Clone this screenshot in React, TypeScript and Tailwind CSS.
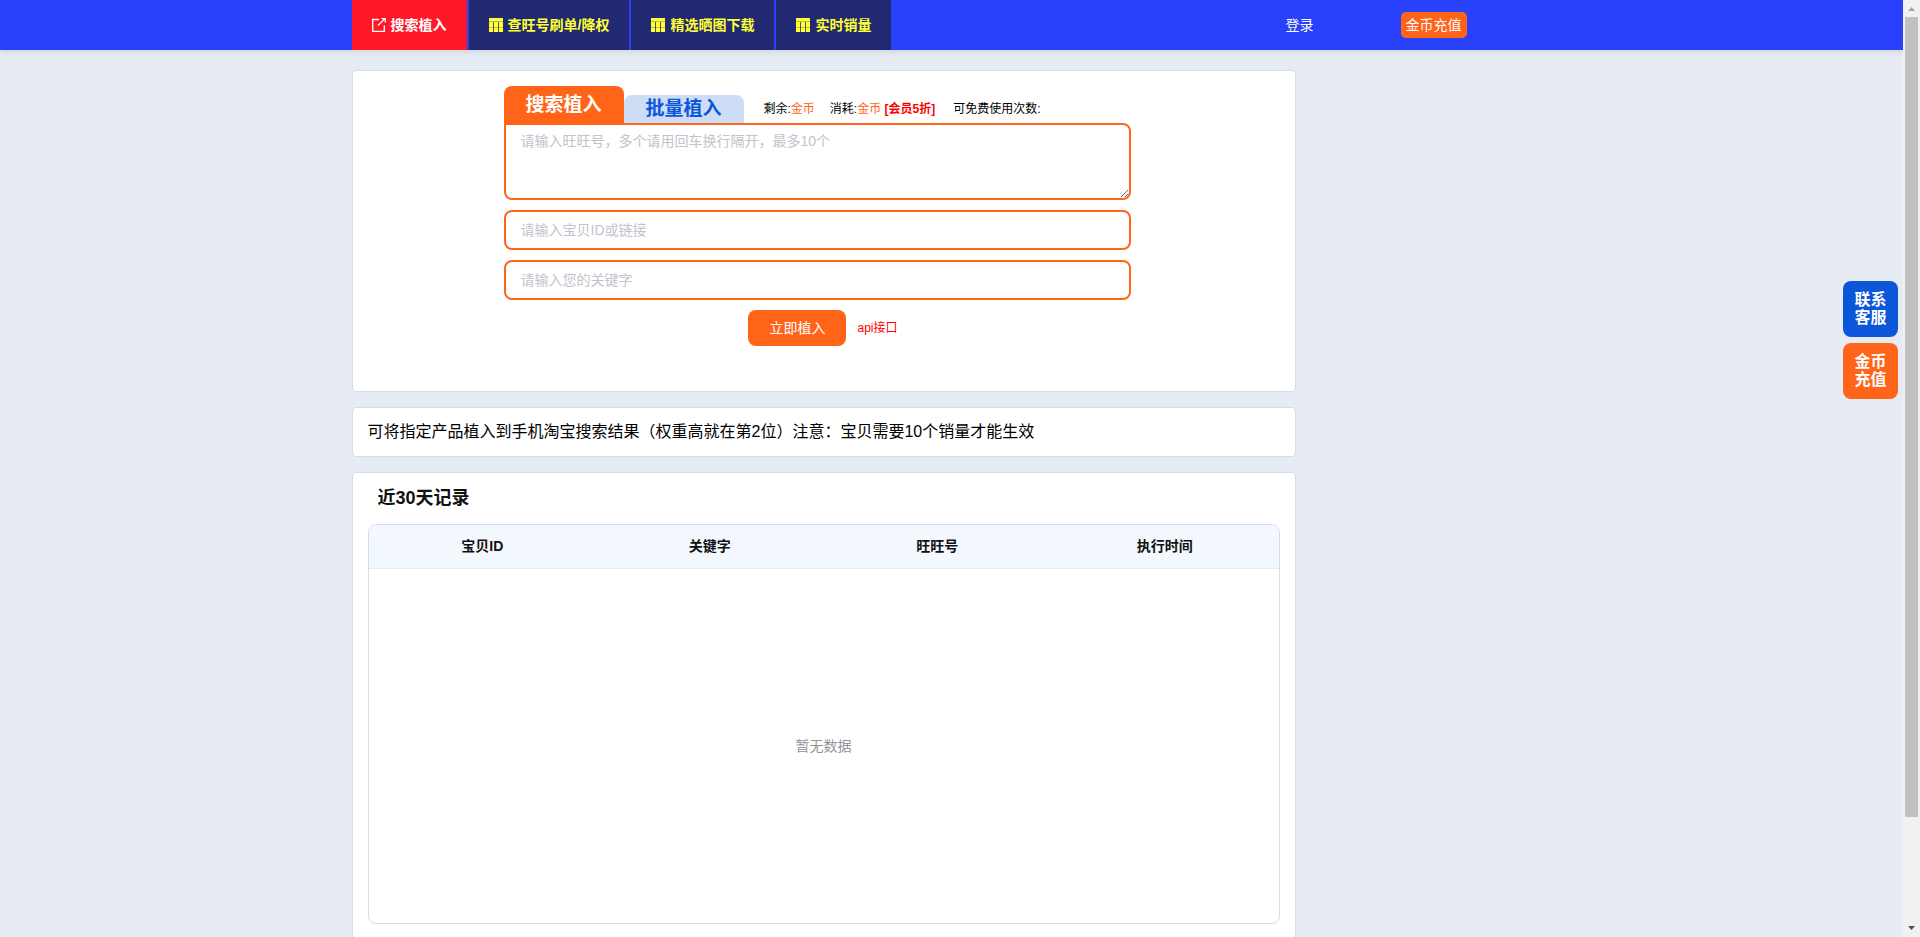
import React from "react";

const tools = ["查旺号刷单/降权", "精选晒图下载", "实时销量"];
const columns = ["宝贝ID", "关键字", "旺旺号", "执行时间"];

function ShareIcon() {
  return (
    <svg width="14" height="14" viewBox="0 0 14 14" fill="none" stroke="currentColor" strokeWidth="1.3" aria-hidden="true">
      <path d="M7 1.500H.7v11.8h11.6V7.500" />
      <path d="M6 7.500 12.800.9M9.500.7h3.800v3.800" />
    </svg>
  );
}

function GridIcon() {
  return (
    <svg width="14" height="14" viewBox="0 0 14 14" aria-hidden="true">
      <path d="M0 0h14v14H0z" fill="currentColor" />
      <path d="M4 4h1v10H4zM9 4h1v10H9z" fill="#202971" fillOpacity="0.8" />
      <path d="M0 3h14v1H0zM0 9h14v1H0z" fill="#202971" fillOpacity="0.3" />
    </svg>
  );
}

function Header() {
  return (
    <header className="shrink-0 bg-[#2941fb] shadow-[0_2px_6px_rgba(0,0,0,0.1)]">
      <div className="mx-auto flex h-[50px] max-w-[1200px] items-center">
        <nav className="flex h-full gap-[2px] text-sm font-bold">
          <a href="#search" className="flex items-center gap-[5px] bg-[#ff1827] px-5 text-white">
            <ShareIcon />
            搜索植入
          </a>
          {tools.map((tool) => (
            <a key={tool} href="#tool" className="flex items-center gap-[5px] bg-[#202971] px-5 text-[#ffff33]">
              <GridIcon />
              {tool}
            </a>
          ))}
        </nav>
        <div className="mr-[85px] ml-auto flex items-center gap-[87px] text-sm text-white">
          <a href="#login">登录</a>
          <a href="#recharge" className="rounded-[5px] bg-[#ff6419] px-[5px] py-[3px]">
            金币充值
          </a>
        </div>
      </div>
    </header>
  );
}

const fieldClass =
  "block w-full border-2 border-[#ff6419] bg-white px-[15px] text-sm text-[#606266] outline-none placeholder:text-[#c0c4cc]";

function SearchCard() {
  return (
    <section className="rounded border border-[#d1def2] bg-white px-[151px] pt-[15px] pb-[45px]">
      <form className="w-full max-w-[627px]" onSubmit={(e) => e.preventDefault()}>
        <div className="flex items-end">
          <button type="button" className="h-[37px] w-[120px] rounded-t-lg bg-[#ff6419] text-[19px] leading-6 font-bold text-white">
            搜索植入
          </button>
          <button type="button" className="h-7 w-[120px] rounded-t-lg bg-[#cdddf6] text-[19px] leading-6 font-bold text-[#0b56d9]">
            批量植入
          </button>
          <div className="flex h-7 items-center pl-5 text-xs text-black">
            <span className="mr-[15px]">
              剩余:<span className="text-[#ff6419]">金币</span>
            </span>
            <span className="mr-[18px]">
              消耗:<span className="text-[#ff6419]">金币</span> <b className="text-[#ff0000]">[会员5折]</b>
            </span>
            <span>可免费使用次数:</span>
          </div>
        </div>
        <textarea
          aria-label="旺旺号"
          placeholder="请输入旺旺号，多个请用回车换行隔开，最多10个"
          className={`${fieldClass} h-[77px] resize rounded-lg rounded-tl-none py-[6px] leading-[21px]`}
        />
        <input aria-label="宝贝ID或链接" placeholder="请输入宝贝ID或链接" className={`${fieldClass} mt-[10px] h-10 rounded-lg`} />
        <input aria-label="关键字" placeholder="请输入您的关键字" className={`${fieldClass} mt-[10px] h-10 rounded-lg`} />
        <div className="mt-[10px] flex items-center justify-center gap-[11px] pl-3">
          <button type="submit" className="h-9 rounded-lg bg-[#ff6419] px-[21px] text-sm text-white">
            立即植入
          </button>
          <a href="#api" className="text-xs text-[#ff0000]">
            api接口
          </a>
        </div>
      </form>
    </section>
  );
}

function RecordsCard() {
  return (
    <section className="min-h-[480px] rounded border border-[#d1def2] bg-white p-[15px] pt-[11px]">
      <h2 className="mb-3 px-[10px] text-lg font-bold text-[#111111]">近30天记录</h2>
      <div className="overflow-hidden rounded-lg border border-[#d1def2]">
        <table className="w-full table-fixed border-collapse text-sm">
          <thead>
            <tr className="h-[43px] border-b border-[#e4ebf5] bg-[#f3f8ff] text-[#111111]">
              {columns.map((column) => (
                <th key={column} scope="col" className="font-bold">
                  {column}
                </th>
              ))}
            </tr>
          </thead>
          <tbody>
            <tr>
              <td colSpan={4} className="h-[355px] text-center text-[#909399]">
                暂无数据
              </td>
            </tr>
          </tbody>
        </table>
      </div>
    </section>
  );
}

function FloatingLinks() {
  return (
    <aside className="absolute top-[281px] right-[22px] flex w-[55px] flex-col gap-[6px] text-center text-base leading-[18px] font-bold text-white">
      <a href="#service" className="rounded-lg bg-[#0b56d9] py-[10px]">
        联系
        <br />
        客服
      </a>
      <a href="#recharge" className="rounded-lg bg-[#ff6419] py-[10px]">
        金币
        <br />
        充值
      </a>
    </aside>
  );
}

function ScrollTrack() {
  return (
    <div aria-hidden="true" className="flex w-[17px] shrink-0 flex-col items-center bg-[#f1f1f1]">
      <svg width="17" height="17" viewBox="0 0 17 17" fill="#a3a3a3">
        <path d="M5 11h7L8.500 7z" />
      </svg>
      <div className="flex w-[13px] flex-1 flex-col">
        <div className="h-[800px] max-h-full bg-[#c1c1c1]" />
      </div>
      <svg width="17" height="17" viewBox="0 0 17 17" fill="#505050">
        <path d="M5 6h7L8.500 10z" />
      </svg>
    </div>
  );
}

export default function App() {
  return (
    <div className="relative flex h-screen overflow-hidden bg-[#e7ebf3] font-['Liberation_Sans','Noto_Sans_CJK_SC',sans-serif]">
      <div className="flex-1 overflow-y-auto [scrollbar-width:none]">
        <Header />
        <div className="mx-auto max-w-[1200px] pt-5 pb-[100px]">
          <main className="flex max-w-[944px] flex-col gap-[15px]">
            <SearchCard />
            <section className="rounded border border-[#d1def2] bg-white px-[15px] py-3 text-base text-black">
              可将指定产品植入到手机淘宝搜索结果（权重高就在第2位）注意：宝贝需要10个销量才能生效
            </section>
            <RecordsCard />
          </main>
        </div>
      </div>
      <ScrollTrack />
      <FloatingLinks />
    </div>
  );
}
